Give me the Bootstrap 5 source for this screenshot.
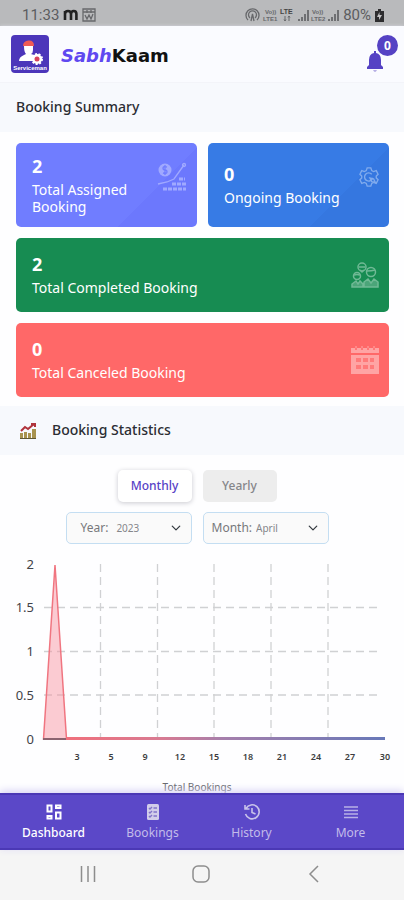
<!DOCTYPE html>
<html lang="en">
<head>
<meta charset="utf-8">
<meta name="viewport" content="width=device-width, initial-scale=1">
<title>SabhKaam Dashboard</title>
<link href="https://cdn.jsdelivr.net/npm/bootstrap@5.3.0/dist/css/bootstrap.min.css" rel="stylesheet">
<style>
body{font-family:"Noto Sans","Open Sans",sans-serif;font-size:14px;background:#fefeff;color:#2b2d33}
.status{background:#b9babc;height:26px;color:#5c5d60;font-family:Roboto,sans-serif;font-size:15px;padding:4px 20px 0 22px}
.topbar{background:#fafbff;height:57px;border-bottom:1px solid #f3f4f9;padding:0 6px 0 11px;box-shadow:0 1px 4px #e9ebf4}
.brand{font-family:"DejaVu Sans",sans-serif;font-weight:700;font-size:18px;line-height:20px;padding-top:4px;color:#111}
.brand em{color:#5f48f0}
.bell{width:32px;height:38px}
.bell .count{top:0;right:0;width:21px;height:21px;background:#5542c4;font-size:12px;font-weight:700}
.band{background:#f7f9fd;height:49px;padding:0 16px;font-size:14px;font-weight:500;color:#2b2d33}
.main-area{scrollbar-width:none;min-height:0}
.stats{padding:11px 15px 9px 16px}
.stack{gap:11px}
.stat{border-radius:5px;padding:0 10px 0 16px;color:#fff;line-height:17px;min-height:74px}
.stat b{display:block;font-size:18px;line-height:20px;margin-bottom:5px}
.stat.half{min-height:84px}
.c-assigned{background:linear-gradient(135deg,#707dff 70%,#6c78fd 70%)}
.c-ongoing{background:linear-gradient(135deg,#377be5 70%,#3577e0 70%)}
.c-done{background:#178c52}
.c-cancel{background:#ff6868}
.toggles{padding:15px 10px 10px 0}
.toggle{width:74px;height:32px;font-size:12px;font-weight:500;border-radius:5px;border:0;padding:0}
.toggle.on{background:#fff;color:#5742c6;box-shadow:0 1px 5px #c9c9cf}
.toggle.off{background:#ededed;color:#85868a}
.pickers{padding-right:10px}
.picker{width:126px;height:32px;border:1px solid #c4def2;border-radius:5px;background:#fafafa;color:#77787b;font-size:12px}
.picker.year{padding-left:14px}
.picker .form-select{font-size:10px;border:0;background-color:transparent;color:#85868a;padding:0 16px 0 0;background-size:10px;background-position:right 2px center;line-height:20px;min-height:0}
.tabs{background:#5b48c8;height:57px;border-top:2px solid #4b38b5;border-bottom:2px solid #4b38b5;box-shadow:0 -2px 8px #d5d0f3}
.tabs a{color:#c3bcea;font-size:12px;line-height:16px;padding-top:2px}
.tabs a.active{color:#fff;font-weight:500}
.tabs svg{margin-bottom:5px}
.sysnav{background:#f5f5f5;height:50px;padding:0 78px}
.sysnav button{width:22px;height:22px;color:#8d8d8d}
</style>
<script src="https://cdn.jsdelivr.net/npm/bootstrap@5.3.0/dist/js/bootstrap.bundle.min.js"></script>
</head>
<body class="vh-100 d-flex flex-column overflow-hidden">
<div class="status d-flex justify-content-between align-items-center">
  <div class="d-flex align-items-center">
    <span>11:33</span>
    <svg class="ms-1" width="15" height="14" viewBox="0 0 15 14" fill="none" stroke="#222" stroke-width="2.600"><path d="M2 12V3M2 6q0-3 3-3t3 3v6M8 6q0-3 2.700-3T13.400 6v6"/></svg>
    <svg class="ms-1" width="14" height="14" viewBox="0 0 14 14" fill="none" stroke="#67686b" stroke-width="1.300"><path d="M1 1h12v12H1zM1 4h12M3 7l2 4 2-4 2 4 2-5M5 2v3M9 2v3"/></svg>
  </div>
  <div class="d-flex align-items-center">
    <svg width="98" height="16" viewBox="0 0 98 16" fill="none" stroke="#67686b">
      <g stroke-width="1.300"><path d="M3 13A6.500 6.500 0 1 1 12 13M5 11A4 4 0 1 1 10 11M6 14l1.500-7L9 14"/></g>
      <g fill="#67686b" stroke="none" font-family="Liberation Sans, sans-serif" font-size="6" font-weight="700"><text x="20" y="7">Vo))</text><text x="18" y="14">LTE1</text><text x="35" y="7" font-size="7" fill="#444">LTE</text><text x="67" y="7">Vo))</text><text x="66" y="14">LTE2</text></g>
      <path d="M40 9v5m-1-1.500 1 1.500 1-1.500M44 14V9m-1 1.500L44 9l1 1.500"/>
      <path stroke-width="1.800" d="M54 14v-2M57 14v-4M60 14V7M63 14V3M84 14v-2M87 14v-4M90 14V7M93 14V3"/>
    </svg>
    <span>80%</span>
    <svg class="ms-1" width="9" height="13" viewBox="0 0 9 13"><path fill="#2d2d2f" d="M3 0h3v2h3v11H0V2h3z"/><path fill="#c4c4c6" d="M4.500 3v3H7L4 11V8H2z"/></svg>
  </div>
</div>
<header class="topbar d-flex align-items-center flex-shrink-0">
  <svg width="38" height="38" viewBox="0 0 38 38" role="img" aria-label="Sabhkaam Serviceman"><rect width="38" height="38" rx="4" fill="#4c36ba"/><path fill="#fff" d="M13 11h9v4q0 3-2 4l6 2v5H8q0-4 5-6l2-1q-2-2-2-8z"/><path fill="#ef5b55" d="M12 11q0-5 5.500-5.500T23 11z"/><circle cx="26" cy="24" r="5" fill="#fff" stroke="#fff" stroke-width="2" stroke-dasharray="2 1.500"/><circle cx="26" cy="24" r="2.500" fill="#d9435c"/><text x="19" y="35" fill="#fff" text-anchor="middle" font-family="Liberation Sans, sans-serif" font-size="6" font-weight="700">Serviceman</text></svg>
  <div class="brand ms-2 ps-1 me-auto"><em>Sabh</em>Kaam</div>
  <button class="bell btn p-0 border-0 position-relative" aria-label="Notifications">
    <svg class="position-absolute bottom-0 start-0" width="18" height="22" viewBox="0 0 18 22"><path fill="#5542c4" d="M8 0h2v2q5 1 5 7v5l2 2v2H1v-2l2-2V9q0-6 5-7z"/><path fill="#b7afe5" d="M7 19h4q-2 4-4 0z"/></svg>
    <span class="count position-absolute rounded-circle text-white d-flex align-items-center justify-content-center">0</span>
  </button>
</header>
<main class="main-area flex-fill overflow-auto">
  <h1 class="band mb-0 d-flex align-items-center">Booking Summary</h1>
  <section class="stats stack d-flex flex-column">
    <div class="stack row g-0">
      <div class="col stat half c-assigned d-flex align-items-center justify-content-between">
        <div><b>2</b>Total Assigned Booking</div>
        <svg class="flex-shrink-0 mb-3" width="30" height="30" viewBox="0 0 30 30" fill="none" stroke="#a0a9ff" stroke-width="1.300"><circle cx="8" cy="8" r="6.500" fill="#a0a9ff" stroke="none"/><path stroke="#707dff" d="M10 5q-4-1-4 1t2 2 2 2-4 1M8 3v10"/><path d="M1 22l9-2 7-3 10-14"/><circle cx="27" cy="3" r="1.500"/><path stroke-width="3" stroke-dasharray="4 1" d="M22 17h6M15 22h14M6 27h23"/></svg>
      </div>
      <div class="col stat half c-ongoing d-flex align-items-center justify-content-between">
        <div class="text-nowrap"><b>0</b>Ongoing Booking</div>
        <svg class="flex-shrink-0 mb-3" width="20" height="20" viewBox="0 0 22 22" fill="none" stroke="#80abed" stroke-width="1.500"><path d="M9 1h4l1 3 2 1 3-1 2 4-2 2v2l2 2-2 4-3-1-2 1-1 3H9l-1-3-2-1-3 1-2-4 2-2v-2L1 8l2-4 3 1 2-1z"/><path d="M15 12a4.500 4.500 0 1 1-1-4M12 12l2 4 4 1-2-4z"/></svg>
      </div>
    </div>
    <div class="stat c-done d-flex align-items-center justify-content-between">
      <div><b>2</b>Total Completed Booking</div>
      <svg width="28" height="26" viewBox="0 0 28 26" fill="none" stroke="#70b995" stroke-width="1.500"><circle cx="11" cy="5" r="4"/><path d="M8 5h6M9 8l2 2 2-2"/><circle cx="6" cy="14" r="3.500"/><path d="M3 13q3-1 6 0"/><circle cx="20" cy="10" r="4.500"/><path d="M16 9q5 0 8-1"/><path fill="#4ba579" d="M1 25v-3l4-3 2 3 2-3 3 3v3zM13 25v-5l4-3 3 4 3-4 4 3v5z"/></svg>
    </div>
    <div class="stat c-cancel d-flex align-items-center justify-content-between">
      <div><b>0</b>Total Canceled Booking</div>
      <svg width="28" height="28" viewBox="0 0 28 28"><path fill="#ffa4a4" d="M0 2h28v5H0zM0 9h28v19H0z"/><path stroke="#ff6868" stroke-width="1.500" d="M5 0v4M11 0v4M17 0v4M23 0v4"/><path stroke="#ffa9a9" d="M5 0v2M11 0v2M17 0v2M23 0v2"/><path fill="#ff7a7a" d="M5 12h5v4H5zM12 12h5v4h-5zM19 12h4v4h-4zM5 19h5v4H5zM12 19h5v4h-5zM19 19h4v4h-4z"/></svg>
    </div>
  </section>
  <h2 class="band mb-0 d-flex align-items-center">
    <svg class="ms-1 me-3" width="16" height="16" viewBox="0 0 16 16"><path fill="#a8934f" d="M0 10h3v6H0zM4 9h3v7H4zM8 10h3v6H8zM12 6h4v10h-4z"/><path fill="#5f5733" d="M0 15h16v1H0z"/><path fill="none" stroke="#b0343c" stroke-width="2" d="M1 8l4-4 3 2 6-5M11 1h4v3"/></svg>Booking Statistics
  </h2>
  <div class="toggles stack d-flex justify-content-center">
    <button class="toggle on">Monthly</button>
    <button class="toggle off">Yearly</button>
  </div>
  <div class="pickers stack d-flex justify-content-center">
    <div class="picker year d-flex align-items-center pe-2"><label for="year" class="me-2">Year:</label><select id="year" class="form-select"><option>2023</option></select></div>
    <div class="picker d-flex align-items-center ps-2 pe-2"><label for="month" class="me-1">Month:</label><select id="month" class="form-select"><option>April</option></select></div>
  </div>
  <svg class="d-block w-100" viewBox="0 546 404 252" role="img" aria-label="Total bookings by day">
    <defs><linearGradient id="fade" x1="66" x2="384" y1="0" y2="0" gradientUnits="userSpaceOnUse"><stop offset="0" stop-color="#f0707c"/><stop offset=".3" stop-color="#d87a92"/><stop offset=".5" stop-color="#a47fac"/><stop offset="1" stop-color="#6878b8"/></linearGradient></defs>
    <g stroke="#d0d1d3" stroke-width="1.300" stroke-dasharray="8 5"><path d="M44 609.500H381M44 653.500H381M44 697H381M100.500 566V741M157.500 566V741M214 566V741M271 566V741M328 566V741"/></g>
    <path fill="#f98f9b" fill-opacity=".45" stroke="#f07580" stroke-width="1.500" d="M43.500 741L55 567l11.500 174z"/>
    <path stroke="#8c6470" stroke-width="2" d="M43 741h23"/>
    <rect x="66" y="739" width="319" height="3" fill="url(#fade)"/>
    <g font-family="Noto Sans, sans-serif" font-size="13" fill="#424347" text-anchor="end"><text x="34" y="571">2</text><text x="34" y="614">1.5</text><text x="34" y="658">1</text><text x="34" y="702">0.5</text><text x="34" y="746">0</text></g>
    <g font-family="Noto Sans, sans-serif" font-size="9" font-weight="600" fill="#3c3d40" text-anchor="middle"><text x="77" y="762">3</text><text x="111" y="762">5</text><text x="145" y="762">9</text><text x="180" y="762">12</text><text x="214" y="762">15</text><text x="248" y="762">18</text><text x="282" y="762">21</text><text x="316" y="762">24</text><text x="350" y="762">27</text><text x="385" y="762">30</text></g>
    <text x="197" y="793" font-family="Noto Sans, sans-serif" font-size="10" fill="#66676b" text-anchor="middle">Total Bookings</text>
  </svg>
</main>
<nav class="tabs row g-0 flex-shrink-0 position-relative px-1" aria-label="Main">
  <a href="#" class="active col d-flex flex-column align-items-center justify-content-center text-decoration-none"><svg width="16" height="16" viewBox="0 0 16 16" fill="none" stroke="#fff" stroke-width="2"><path d="M1.500 1.500h4v6h-4zM10 1.500h4.500v2.500H10zM1.500 12h4v2.500h-4zM10 8.500h4.500v6H10z"/></svg>Dashboard</a>
  <a href="#" class="col d-flex flex-column align-items-center justify-content-center text-decoration-none"><svg width="16" height="16" viewBox="0 0 16 16"><rect x="2" width="12" height="16" rx="1.500" fill="#d2cdea"/><path fill="none" stroke="#8173c9" stroke-width="1.400" d="M4 4l1 1 2-2M8.500 4H12M4 8l1 1 2-2M8.500 8H12M4 12l1 1 2-2M8.500 12H12"/></svg>Bookings</a>
  <a href="#" class="col d-flex flex-column align-items-center justify-content-center text-decoration-none"><svg width="16" height="16" viewBox="0 0 16 16" fill="none" stroke="#c9c3ea" stroke-width="1.600"><path d="M2 4.500A7 7 0 1 1 1.500 10M1 1v4h4.500M8 4v4.500l3.500 1.500"/></svg>History</a>
  <a href="#" class="col d-flex flex-column align-items-center justify-content-center text-decoration-none"><svg width="16" height="16" viewBox="0 0 16 16" stroke="#b9b1e6" stroke-width="1.300"><path d="M1 3h14M1 6.500h14M1 10h14M1 13.500h14"/></svg>More</a>
</nav>
<div class="sysnav d-flex align-items-center justify-content-between flex-shrink-0">
  <button class="btn p-0 border-0 d-flex" aria-label="Recent apps"><svg width="20" height="20" viewBox="0 0 20 20" stroke="currentColor" stroke-width="1.500"><path d="M3.500 2v16M10 2v16M16.500 2v16"/></svg></button>
  <button class="btn p-0 border-0 d-flex" aria-label="Home"><svg width="20" height="20" viewBox="0 0 20 20" fill="none" stroke="currentColor" stroke-width="1.500"><rect x="2" y="2" width="16" height="16" rx="5"/></svg></button>
  <button class="btn p-0 border-0 d-flex" aria-label="Back"><svg width="20" height="20" viewBox="0 0 20 20" fill="none" stroke="currentColor" stroke-width="1.500"><path d="M14 2L6 10l8 8"/></svg></button>
</div>
</body>
</html>
